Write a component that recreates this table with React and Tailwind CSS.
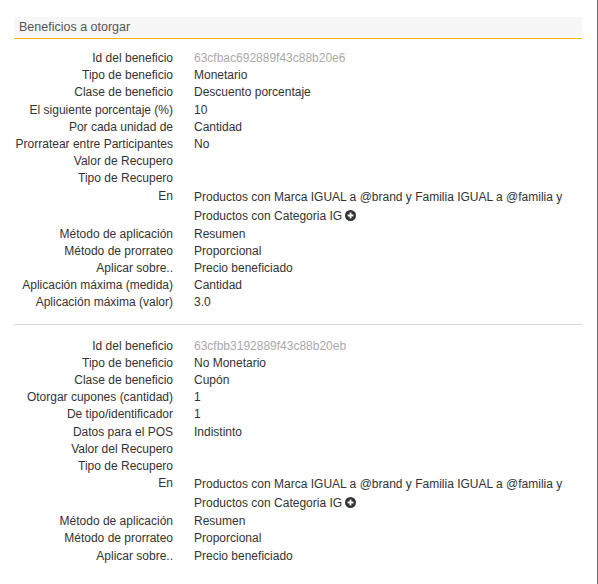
import React from "react";

function PlusCircle() {
  return (
    <svg width="11" height="11" viewBox="0 0 12 12" className="inline-block align-[-1px] ml-[3px]">
      <circle cx="6" cy="6" r="6" fill="#333" />
      <rect x="2.8" y="5" width="6.4" height="2" fill="#fff" />
      <rect x="5" y="2.8" width="2" height="6.4" fill="#fff" />
    </svg>
  );
}

function Row({ label, children, muted, multi }) {
  return (
    <div className="grid grid-cols-[159px_1fr]">
      <div className="text-right">{label}</div>
      <div className={"pl-[21px] " + (muted ? "text-[#aaa] " : "") + (multi ? "leading-[19px]" : "")}>
        {children}
      </div>
    </div>
  );
}

const enText = (
  <>
    Productos con Marca IGUAL a @brand y Familia IGUAL a @familia y
    <br />
    Productos con Categoria IG
    <PlusCircle />
  </>
);

export default function App() {
  return (
    <div className="w-[598px] h-[584px] bg-white border-r border-[#6b6b6b] font-['Liberation_Sans',Arial,sans-serif] text-[12px] leading-[17.2px] text-[#333]">
      <div className="ml-[14px] w-[568px] pt-[17px]">
        <div className="h-[22px] bg-[#f7f7f7] border-b border-[#ffb400] pl-[5px] pt-[2px] text-[12.5px] text-[#555]">
          Beneficios a otorgar
        </div>
        <div className="pt-[11px]">
          <Row label="Id del beneficio" muted>63cfbac692889f43c88b20e6</Row>
          <Row label="Tipo de beneficio">Monetario</Row>
          <Row label="Clase de beneficio">Descuento porcentaje</Row>
          <Row label="El siguiente porcentaje (%)">10</Row>
          <Row label="Por cada unidad de">Cantidad</Row>
          <Row label="Prorratear entre Participantes">No</Row>
          <Row label="Valor de Recupero">{"\u00a0"}</Row>
          <Row label="Tipo de Recupero">{"\u00a0"}</Row>
          <Row label="En" multi>{enText}</Row>
          <Row label="Método de aplicación">Resumen</Row>
          <Row label="Método de prorrateo">Proporcional</Row>
          <Row label="Aplicar sobre..">Precio beneficiado</Row>
          <Row label="Aplicación máxima (medida)">Cantidad</Row>
          <Row label="Aplicación máxima (valor)">3.0</Row>
        </div>
        <div className="mt-[12px] mb-[13px] border-t border-[#d9d9d9]" />
        <div>
          <Row label="Id del beneficio" muted>63cfbb3192889f43c88b20eb</Row>
          <Row label="Tipo de beneficio">No Monetario</Row>
          <Row label="Clase de beneficio">Cupón</Row>
          <Row label="Otorgar cupones (cantidad)">1</Row>
          <Row label="De tipo/identificador">1</Row>
          <Row label="Datos para el POS">Indistinto</Row>
          <Row label="Valor del Recupero">{"\u00a0"}</Row>
          <Row label="Tipo de Recupero">{"\u00a0"}</Row>
          <Row label="En" multi>{enText}</Row>
          <Row label="Método de aplicación">Resumen</Row>
          <Row label="Método de prorrateo">Proporcional</Row>
          <Row label="Aplicar sobre..">Precio beneficiado</Row>
        </div>
      </div>
    </div>
  );
}
